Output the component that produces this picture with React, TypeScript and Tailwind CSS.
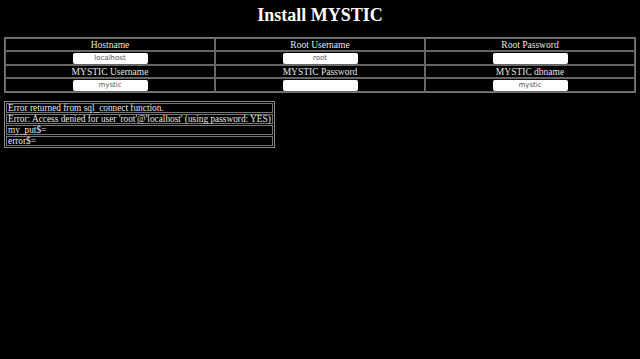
const fields = [
  [
    { label: 'Hostname', value: 'localhost' },
    { label: 'Root Username', value: 'root' },
    { label: 'Root Password', value: '' },
  ],
  [
    { label: 'MYSTIC Username', value: 'mystic' },
    { label: 'MYSTIC Password', value: '' },
    { label: 'MYSTIC dbname', value: 'mystic' },
  ],
]

const errors = [
  'Error returned from sql_connect function.',
  "Error: Access denied for user 'root'@'localhost' (using password: YES)",
  'my_put$=',
  'error$=',
]

export default function App() {
  return (
    <div className="h-[359px] w-[640px] overflow-hidden bg-black px-[4px] pt-[6px] font-['Liberation_Serif',serif] text-[#e6e6e6]">
      <h1 className="text-center text-[18px] leading-[18px] font-bold text-white">Install MYSTIC</h1>
      <table className="mt-[13px] w-full table-fixed border-separate border-spacing-0 border border-[#777] text-[9.5px]">
        <tbody>
          {fields.map((row, i) => (
            <FieldRows key={i} row={row} />
          ))}
        </tbody>
      </table>
      <table className="mt-[8px] w-[271px] border-separate border-spacing-[1px] border border-[#888] text-[9.3px]">
        <tbody>
          {errors.map((line) => (
            <tr key={line}>
              <td className="h-[10px] border border-[#777] px-[1px] py-0 leading-[8px] whitespace-nowrap">
                {line}
              </td>
            </tr>
          ))}
        </tbody>
      </table>
    </div>
  )
}

function FieldRows({ row }: { row: { label: string; value: string }[] }) {
  return (
    <>
      <tr>
        {row.map((field) => (
          <td
            key={field.label}
            className="h-[13px] border border-[#666] p-0 text-center leading-[10px]"
          >
            {field.label}
          </td>
        ))}
      </tr>
      <tr>
        {row.map((field) => (
          <td key={field.label} className="h-[14px] border border-[#666] p-0 text-center">
            <input
              readOnly
              value={field.value}
              className="mx-auto block h-[11px] w-[75px] rounded-[2px] bg-white text-center font-['DejaVu_Sans',sans-serif] text-[7px] leading-[11px] text-[#555] outline-none"
            />
          </td>
        ))}
      </tr>
    </>
  )
}
